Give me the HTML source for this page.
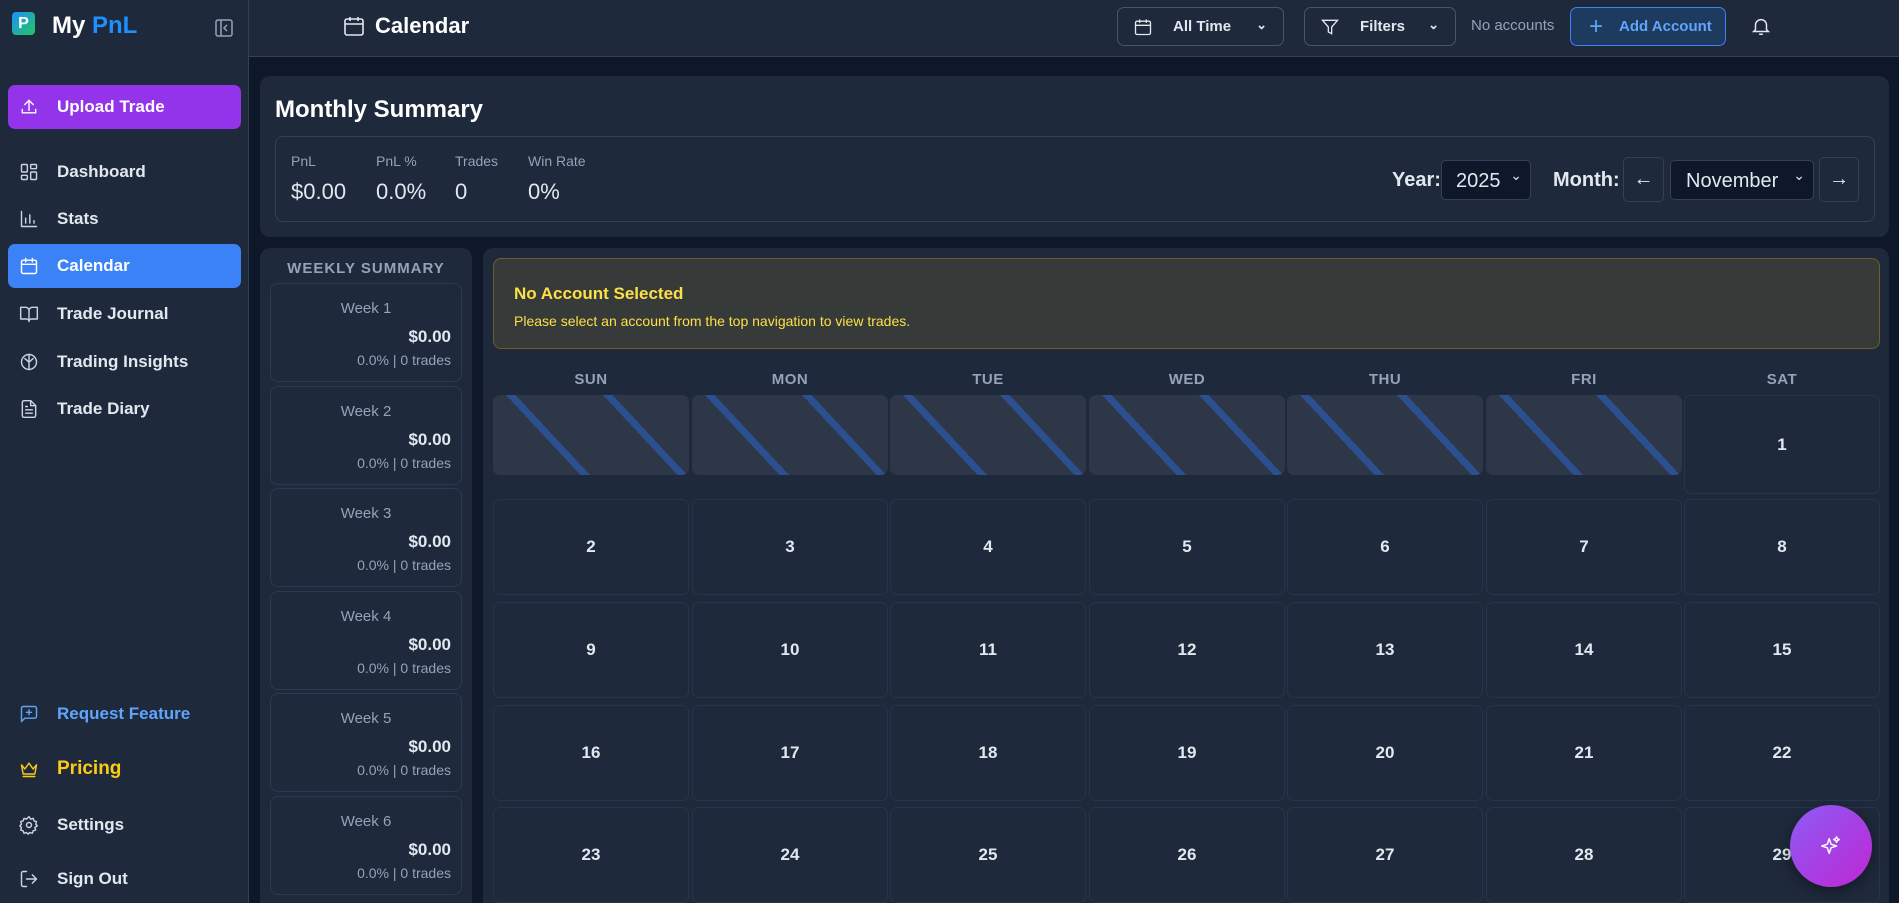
<!DOCTYPE html>
<html><head><meta charset="utf-8"><style>
*{box-sizing:border-box;margin:0;padding:0}
html{width:1899px;height:903px;overflow:hidden}
body{width:1899px;height:903px;overflow:hidden;background:#0f172a;font-family:"Liberation Sans",sans-serif;color:#e2e8f0;position:relative}
.a{position:absolute}
.side{left:0;top:0;width:249px;height:903px;background:#1e293b;border-right:1px solid #334155}
.nav{position:absolute;left:8px;width:233px;height:44px;display:flex;align-items:center;font-size:17px;font-weight:bold;color:#e2e8f0;border-radius:7px}
.nav svg{position:absolute;left:11px;width:20px;height:20px;fill:none;stroke:#cbd5e1;stroke-width:1.7;stroke-linecap:round;stroke-linejoin:round}
.nav span{position:absolute;left:49px}
.top{left:249px;top:0;width:1650px;height:57px;background:#1e293b;border-bottom:1px solid #334155}
.btn{position:absolute;top:7px;height:39px;border:1px solid #475569;border-radius:7px;font-size:15px;font-weight:bold;color:#e2e8f0;display:flex;align-items:center}
.card{background:#1e293b;border-radius:10px}
.lbl{font-size:14px;color:#94a3b8}
.val{font-size:22px;color:#e2e8f0}
.wk{position:absolute;left:10px;width:192px;height:99px;border:1px solid #2c3a50;border-radius:8px;background:#1e293b}
.wk .t{position:absolute;top:16px;width:100%;text-align:center;font-size:15px;color:#94a3b8}
.wk .v{position:absolute;top:43px;right:10px;font-size:17px;font-weight:bold;color:#e2e8f0}
.wk .s{position:absolute;top:68px;right:10px;font-size:14px;color:#94a3b8}
.dh{position:absolute;top:371px;width:196px;text-align:center;font-size:15px;font-weight:bold;color:#94a3b8;letter-spacing:.5px}
.st{position:absolute;top:395px;width:196px;height:80px;border-radius:7px;background-color:#2d3748;background-image:repeating-linear-gradient(47deg,#2d3748 0 64px,#2c4f8f 64px 71px);}
.dc{position:absolute;width:196px;height:96px;border:1px solid #27344a;border-radius:7px;background:#1e293b;display:flex;align-items:center;justify-content:center;font-size:17px;font-weight:bold;color:#e2e8f0}
.sel{background:#0f172a;border:1px solid #334155;border-radius:5px;color:#e2e8f0;font-size:20px}
</style></head><body>
<div class="a side">
 <div class="a" style="left:12px;top:12px;width:23px;height:23px;border-radius:4px;background:linear-gradient(135deg,#1e90ff,#22c55e);color:#fff;font-weight:bold;font-size:16px;text-align:center;line-height:23px">P</div>
 <div class="a" style="left:52px;top:12px;font-size:24px;font-weight:bold;color:#fff">My <span style="color:#1e8fff">PnL</span></div>
 <svg class="a" style="left:215px;top:19px" width="18" height="18" viewBox="0 0 18 18" fill="none" stroke="#94a3b8" stroke-width="1.5"><rect x="1" y="1" width="16" height="16" rx="2"/><path d="M6 1v16M12 6l-3 3 3 3"/></svg>
 <div class="nav" style="top:85px;background:#9333ea;color:#fff"><svg viewBox="0 0 24 24" style="stroke:#fff"><path d="M4 15v4h16v-4M12 16V4M7 9l5-5 5 5"/></svg><span>Upload Trade</span></div>
 <div class="nav" style="top:150px"><svg viewBox="0 0 24 24"><rect x="3" y="3" width="7" height="9" rx="1"/><rect x="14" y="3" width="7" height="5" rx="1"/><rect x="14" y="12" width="7" height="9" rx="1"/><rect x="3" y="16" width="7" height="5" rx="1"/></svg><span>Dashboard</span></div>
 <div class="nav" style="top:197px"><svg viewBox="0 0 24 24"><path d="M3 3v18h18M8 17v-6M13 17V7M18 17v-3"/></svg><span>Stats</span></div>
 <div class="nav" style="top:244px;background:#3b82f6;color:#fff"><svg viewBox="0 0 24 24" style="stroke:#fff"><rect x="3" y="5" width="18" height="16" rx="2"/><path d="M3 10h18M8 3v4M16 3v4"/></svg><span>Calendar</span></div>
 <div class="nav" style="top:292px"><svg viewBox="0 0 24 24"><path d="M2 4h6a4 4 0 0 1 4 4v13a3 3 0 0 0-3-3H2zM22 4h-6a4 4 0 0 0-4 4v13a3 3 0 0 1 3-3h7z"/></svg><span>Trade Journal</span></div>
 <div class="nav" style="top:340px"><svg viewBox="0 0 24 24"><circle cx="12" cy="12" r="9"/><path d="M12 3v18M7 8c2 1 3 3 5 4M17 8c-2 1-3 3-5 4"/></svg><span>Trading Insights</span></div>
 <div class="nav" style="top:387px"><svg viewBox="0 0 24 24"><path d="M14 2H6a2 2 0 0 0-2 2v16a2 2 0 0 0 2 2h12a2 2 0 0 0 2-2V8z"/><path d="M14 2v6h6M8 13h8M8 17h8M8 9h2"/></svg><span>Trade Diary</span></div>
 <div class="nav" style="top:692px;color:#60a5fa"><svg viewBox="0 0 24 24" style="stroke:#60a5fa"><path d="M21 15a2 2 0 0 1-2 2H7l-4 4V5a2 2 0 0 1 2-2h14a2 2 0 0 1 2 2z"/><path d="M12 7v6M9 10h6"/></svg><span>Request Feature</span></div>
 <div class="nav" style="top:747px;color:#facc15;font-size:19px"><svg viewBox="0 0 24 24" style="stroke:#facc15"><path d="M3 7l4 5 5-7 5 7 4-5-2 11H5zM5 21h14"/></svg><span>Pricing</span></div>
 <div class="nav" style="top:803px"><svg viewBox="0 0 24 24"><circle cx="12" cy="12" r="3"/><path d="M12 2l2 3 3-1 1 3 3 1-1 3 2 2-3 2 1 3-3 1-1 3-3-1-2 2-2-2-3 1-1-3-3-1 1-3-2-2 2-2-1-3 3-1 1-3 3 1z"/></svg><span>Settings</span></div>
 <div class="nav" style="top:857px"><svg viewBox="0 0 24 24"><path d="M9 21H5a2 2 0 0 1-2-2V5a2 2 0 0 1 2-2h4M16 17l5-5-5-5M21 12H9"/></svg><span>Sign Out</span></div>
</div>
<div class="a top">
 <svg class="a" style="left:93px;top:14px" width="24" height="24" viewBox="0 0 24 24" fill="none" stroke="#e2e8f0" stroke-width="1.6"><rect x="3" y="5" width="18" height="16" rx="2"/><path d="M3 10h18M8 3v4M16 3v4"/></svg>
 <div class="a" style="left:126px;top:13px;font-size:22px;font-weight:bold;color:#fff">Calendar</div>
</div>
<div class="btn" style="left:1117px;width:167px"><svg style="margin-left:15px" width="20" height="20" viewBox="0 0 24 24" fill="none" stroke="#e2e8f0" stroke-width="1.6"><rect x="3" y="5" width="18" height="16" rx="2"/><path d="M3 10h18M8 3v4M16 3v4"/></svg><span style="margin-left:20px">All Time</span><span style="position:absolute;right:16px;top:9px;font-size:13px">&#8964;</span></div>
<div class="btn" style="left:1304px;width:152px"><svg style="margin-left:15px" width="20" height="20" viewBox="0 0 24 24" fill="none" stroke="#e2e8f0" stroke-width="1.6"><path d="M3 4h18l-7 8v8l-4-2v-6z"/></svg><span style="margin-left:20px">Filters</span><span style="position:absolute;right:16px;top:9px;font-size:13px">&#8964;</span></div>
<div class="a" style="left:1471px;top:17px;font-size:15px;color:#94a3b8">No accounts</div>
<div class="btn" style="left:1570px;width:156px;border-color:#3b82f6;background:#1e3a5f;color:#60a5fa"><span style="margin-left:18px;font-size:24px;font-weight:normal">+</span><span style="margin-left:16px">Add Account</span></div>
<svg class="a" style="left:1750px;top:15px" width="22" height="22" viewBox="0 0 24 24" fill="none" stroke="#e2e8f0" stroke-width="1.6"><path d="M6 16V11a6 6 0 0 1 12 0v5l2 2H4zM10 21h4"/></svg>

<div class="a card" style="left:260px;top:76px;width:1629px;height:161px">
 <div class="a" style="left:15px;top:20px;font-size:24px;font-weight:bold;color:#fff">Monthly Summary</div>
 <div class="a" style="left:15px;top:60px;width:1600px;height:86px;border:1px solid #334155;border-radius:8px">
  <div class="a lbl" style="left:15px;top:16px">PnL</div><div class="a val" style="left:15px;top:42px">$0.00</div>
  <div class="a lbl" style="left:100px;top:16px">PnL %</div><div class="a val" style="left:100px;top:42px">0.0%</div>
  <div class="a lbl" style="left:179px;top:16px">Trades</div><div class="a val" style="left:179px;top:42px">0</div>
  <div class="a lbl" style="left:252px;top:16px">Win Rate</div><div class="a val" style="left:252px;top:42px">0%</div>
 </div>
</div>
<div class="a" style="left:1392px;top:169px;font-size:20px;font-weight:bold;color:#e2e8f0">Year:</div>
<div class="a sel" style="left:1441px;top:160px;width:90px;height:40px;padding:9px 14px">2025<span style="position:absolute;right:8px;top:6px;font-size:14px">&#8964;</span></div>
<div class="a" style="left:1553px;top:169px;font-size:20px;font-weight:bold;color:#e2e8f0">Month:</div>
<div class="a" style="left:1623px;top:157px;width:41px;height:45px;border:1px solid #334155;border-radius:5px;text-align:center;line-height:43px;font-size:20px">&#8592;</div>
<div class="a sel" style="left:1670px;top:160px;width:144px;height:40px;padding:9px 15px">November<span style="position:absolute;right:8px;top:6px;font-size:14px">&#8964;</span></div>
<div class="a" style="left:1819px;top:157px;width:40px;height:45px;border:1px solid #334155;border-radius:5px;text-align:center;line-height:43px;font-size:20px">&#8594;</div>

<div class="a card" style="left:260px;top:248px;width:212px;height:655px;border-radius:10px 10px 0 0">
 <div class="a" style="top:12px;width:100%;text-align:center;font-size:15px;font-weight:bold;color:#94a3b8;letter-spacing:1px">WEEKLY SUMMARY</div>
 <div class="wk" style="top:35px"><div class="t">Week 1</div><div class="v">$0.00</div><div class="s">0.0% | 0 trades</div></div>
 <div class="wk" style="top:138px"><div class="t">Week 2</div><div class="v">$0.00</div><div class="s">0.0% | 0 trades</div></div>
 <div class="wk" style="top:240px"><div class="t">Week 3</div><div class="v">$0.00</div><div class="s">0.0% | 0 trades</div></div>
 <div class="wk" style="top:343px"><div class="t">Week 4</div><div class="v">$0.00</div><div class="s">0.0% | 0 trades</div></div>
 <div class="wk" style="top:445px"><div class="t">Week 5</div><div class="v">$0.00</div><div class="s">0.0% | 0 trades</div></div>
 <div class="wk" style="top:548px"><div class="t">Week 6</div><div class="v">$0.00</div><div class="s">0.0% | 0 trades</div></div>
</div>

<div class="a card" style="left:483px;top:248px;width:1406px;height:655px;border-radius:10px 10px 0 0"></div>
<div class="a" style="left:493px;top:258px;width:1387px;height:91px;background:#363a38;border:1px solid #6b5e26;border-radius:8px">
 <div class="a" style="left:20px;top:25px;font-size:17px;font-weight:bold;color:#fde047">No Account Selected</div>
 <div class="a" style="left:20px;top:54px;font-size:14px;color:#fde047">Please select an account from the top navigation to view trades.</div>
</div>
<div class="dh" style="left:493px">SUN</div><div class="dh" style="left:692px">MON</div><div class="dh" style="left:890px">TUE</div><div class="dh" style="left:1089px">WED</div><div class="dh" style="left:1287px">THU</div><div class="dh" style="left:1486px">FRI</div><div class="dh" style="left:1684px">SAT</div>
<div class="st" style="left:493px"></div><div class="st" style="left:692px"></div><div class="st" style="left:890px"></div><div class="st" style="left:1089px"></div><div class="st" style="left:1287px"></div><div class="st" style="left:1486px"></div>
<div class="dc" style="left:1684px;top:395px;height:99px">1</div>
<div class="dc" style="left:493px;top:499px">2</div><div class="dc" style="left:692px;top:499px">3</div><div class="dc" style="left:890px;top:499px">4</div><div class="dc" style="left:1089px;top:499px">5</div><div class="dc" style="left:1287px;top:499px">6</div><div class="dc" style="left:1486px;top:499px">7</div><div class="dc" style="left:1684px;top:499px">8</div>
<div class="dc" style="left:493px;top:602px">9</div><div class="dc" style="left:692px;top:602px">10</div><div class="dc" style="left:890px;top:602px">11</div><div class="dc" style="left:1089px;top:602px">12</div><div class="dc" style="left:1287px;top:602px">13</div><div class="dc" style="left:1486px;top:602px">14</div><div class="dc" style="left:1684px;top:602px">15</div>
<div class="dc" style="left:493px;top:705px">16</div><div class="dc" style="left:692px;top:705px">17</div><div class="dc" style="left:890px;top:705px">18</div><div class="dc" style="left:1089px;top:705px">19</div><div class="dc" style="left:1287px;top:705px">20</div><div class="dc" style="left:1486px;top:705px">21</div><div class="dc" style="left:1684px;top:705px">22</div>
<div class="dc" style="left:493px;top:807px">23</div><div class="dc" style="left:692px;top:807px">24</div><div class="dc" style="left:890px;top:807px">25</div><div class="dc" style="left:1089px;top:807px">26</div><div class="dc" style="left:1287px;top:807px">27</div><div class="dc" style="left:1486px;top:807px">28</div><div class="dc" style="left:1684px;top:807px">29</div>
<div class="a" style="left:1790px;top:805px;width:82px;height:82px;border-radius:50%;background:linear-gradient(135deg,#8b5cf6,#c026d3);box-shadow:0 4px 14px rgba(0,0,0,.4)">
 <svg class="a" style="left:30px;top:30px" width="22" height="22" viewBox="0 0 24 24" fill="none" stroke="#fff" stroke-width="1.6" stroke-linejoin="round"><path d="M10 4l2 6 6 2-6 2-2 6-2-6-6-2 6-2zM18 2l1 2 2 1-2 1-1 2-1-2-2-1 2-1z"/></svg>
</div>
</body></html>
